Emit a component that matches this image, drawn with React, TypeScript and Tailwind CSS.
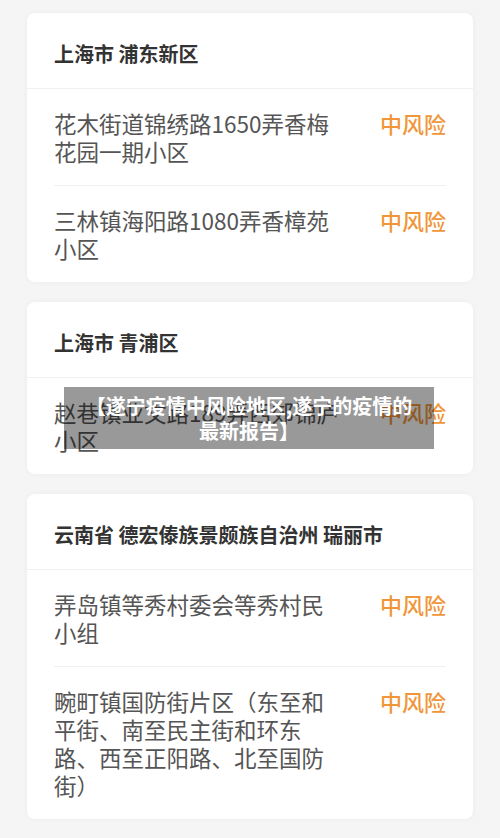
const areas = [
  {
    title: "上海市 浦东新区",
    rows: [
      ["花木街道锦绣路1650弄香梅", "花园一期小区"],
      ["三林镇海阳路1080弄香樟苑", "小区"],
    ],
  },
  {
    title: "上海市 青浦区",
    rows: [["赵巷镇业文路189弄西郊锦庐", "小区"]],
  },
  {
    title: "云南省 德宏傣族景颇族自治州 瑞丽市",
    rows: [
      ["弄岛镇等秀村委会等秀村民", "小组"],
      ["畹町镇国防街片区（东至和", "平街、南至民主街和环东", "路、西至正阳路、北至国防", "街）"],
    ],
  },
];

const App = () => {
  return (
    <div className="relative min-h-[838px] bg-[#f5f5f5] px-[27px] pt-[13px] pb-4 flex flex-col gap-5 font-['Noto_Sans_CJK_SC','Noto_Sans',sans-serif]">
      {areas.map((area) => (
        <div key={area.title} className="bg-white rounded-lg shadow-[0_0_6px_rgba(0,0,0,0.04)]">
          <div className="h-[76px] pt-[6px] flex items-center px-[27px] border-b border-[#f2f2f2] text-[20px] font-bold text-[#333]">
            {area.title}
          </div>
          <div className="px-[27px]">
            {area.rows.map((lines, i) => (
              <div
                key={i}
                className={`flex justify-between py-5 ${i > 0 ? "border-t border-[#f0f0f0]" : ""}`}
              >
                <div className="text-[22.5px] leading-[28px] text-[#555]">
                  {lines.map((l) => (
                    <div key={l} className="whitespace-nowrap">
                      {l}
                    </div>
                  ))}
                </div>
                <span className="text-[22px] leading-[28px] font-medium text-[#f0963a]">中风险</span>
              </div>
            ))}
          </div>
        </div>
      ))}

      {/* caption overlay */}
      <div className="absolute left-[64px] top-[387px] w-[370px] h-[62px] bg-black/40 flex flex-col items-center justify-center text-center text-white font-bold text-[20px] leading-[25px]">
        <span className="whitespace-nowrap">【遂宁疫情中风险地区,遂宁的疫情的</span>
        <span className="whitespace-nowrap">最新报告】</span>
      </div>
    </div>
  );
};

export default App;
